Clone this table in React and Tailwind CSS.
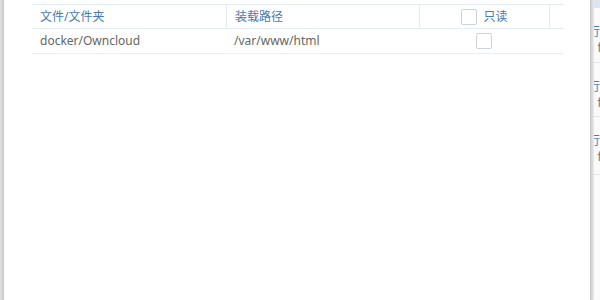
export default function App() {
  return (
    <div className="flex h-[300px] w-[600px] overflow-hidden bg-white font-['Noto_Sans','Noto_Sans_CJK_SC',sans-serif] text-[12px]">
      <div className="w-[4px] shrink-0 bg-gradient-to-r from-[#e2e2e2] to-[#c9c9c9]" />

      <div className="flex-1 bg-white pl-[28px] pt-[4px]">
        <div className="w-[531px]">
          <div className="flex h-[25px] border-t border-b border-[#e3ebf3] text-[#4a7ab0]">
            <div className="flex w-[194px] items-center pl-2">文件/文件夹</div>
            <div className="flex w-[193px] items-center border-l border-[#e3ebf3] pl-2">装载路径</div>
            <div className="flex w-[130px] items-center justify-center gap-[6px] border-l border-[#e3ebf3]">
              <span className="h-4 w-4 rounded-[2px] border border-[#cbd2da] bg-white" />
              <span>只读</span>
            </div>
            <div className="w-[14px] border-l border-[#e3ebf3]" />
          </div>
          <div className="flex h-[25px] border-b border-[#e9eef3] text-[#666]">
            <div className="flex w-[194px] items-center pl-2">docker/Owncloud</div>
            <div className="flex w-[193px] items-center pl-2">/var/www/html</div>
            <div className="flex w-[130px] items-center justify-center">
              <span className="h-4 w-4 rounded-[2px] border border-[#cbd2da] bg-white" />
            </div>
          </div>
        </div>
      </div>

      <div className="w-[4px] shrink-0 bg-gradient-to-r from-[#c4c4c4] to-[#ececec]" />

      <div className="w-[6px] shrink-0 overflow-hidden bg-[#fafafa]">
        <div className="h-[8px] bg-[#dae5f1]" />
        {[55, 54, 58].map((h, i) => (
          <div key={i} style={{ height: h }} className="border-b border-[#e6e6e6] pt-[16px] whitespace-nowrap">
            <div className="ml-[-18px] leading-[16px] text-[#4a7ab0]">运行</div>
            <div className="ml-[-7px] leading-[16px] text-[#777]">o f</div>
          </div>
        ))}
      </div>
    </div>
  );
}
